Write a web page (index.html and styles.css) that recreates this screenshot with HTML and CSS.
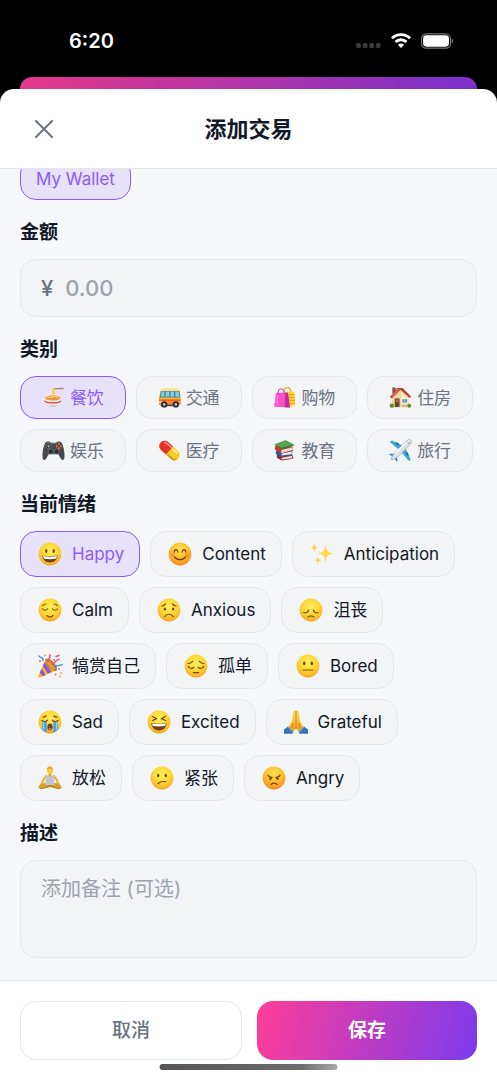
FILE: index.html
```html
<!DOCTYPE html>
<html lang="zh-CN">
<head>
<meta charset="utf-8">
<meta name="viewport" content="width=device-width, initial-scale=1">
<title>添加交易</title>
<link rel="stylesheet" href="styles.css">
</head>
<body>
<svg class="defs" width="0" height="0" aria-hidden="true">
  <defs>
    <radialGradient id="skin" cx="0.5" cy="0.35" r="0.68">
      <stop offset="0" stop-color="#ffee5c"/><stop offset="0.55" stop-color="#ffd633"/><stop offset="0.85" stop-color="#fcb423"/><stop offset="1" stop-color="#f08c12"/>
    </radialGradient>
    <radialGradient id="warm" cx="0.5" cy="0.3" r="0.72">
      <stop offset="0" stop-color="#ffe052"/><stop offset="0.5" stop-color="#ffc02f"/><stop offset="0.85" stop-color="#fa9a1f"/><stop offset="1" stop-color="#ec7711"/>
    </radialGradient>
    <linearGradient id="gold" x1="0" y1="0" x2="0" y2="1">
      <stop offset="0" stop-color="#ffd84a"/><stop offset="1" stop-color="#f0a01c"/>
    </linearGradient>
    <linearGradient id="bus" x1="0" y1="0" x2="0" y2="1">
      <stop offset="0" stop-color="#ffe9a0"/><stop offset="0.5" stop-color="#ffc52d"/><stop offset="1" stop-color="#f47a20"/>
    </linearGradient>
    <linearGradient id="star" x1="0" y1="0" x2="0" y2="1">
      <stop offset="0" stop-color="#ffc05a"/><stop offset="0.5" stop-color="#ffdd43"/><stop offset="1" stop-color="#ffc48a"/>
    </linearGradient>
    <symbol id="face" viewBox="0 0 24 24"><circle cx="12" cy="12" r="11.4" fill="url(#skin)"/></symbol>
    <symbol id="face-warm" viewBox="0 0 24 24"><circle cx="12" cy="12" r="11.4" fill="url(#warm)"/></symbol>
  </defs>
</svg>

<div class="screen">
  <header class="status">
    <time class="clock">6:20</time>
    <div class="signals">
      <svg class="dots" viewBox="0 0 25 5" aria-hidden="true"><g fill="#3c3c3e"><rect x="0" width="5" height="5" rx="2"/><rect x="6.6" width="5" height="5" rx="2"/><rect x="13.2" width="5" height="5" rx="2"/><rect x="19.8" width="5" height="5" rx="2"/></g></svg>
      <svg class="wifi" viewBox="0 0 20 15" aria-label="Wi-Fi"><g fill="none" stroke="#fff" stroke-width="2.8"><path d="M1 5.3a12.8 12.8 0 0 1 18 0"/><path d="M4.5 9a7.8 7.8 0 0 1 11 0"/></g><path d="M10 15 6.9 11.8a4.4 4.4 0 0 1 6.2 0z" fill="#fff"/></svg>
      <svg class="battery" viewBox="0 0 34 16" aria-label="电池"><rect x=".6" y=".6" width="29.8" height="14.8" rx="4.8" fill="none" stroke="#77777a" stroke-width="1.2"/><rect x="2.2" y="2.2" width="26.6" height="11.6" rx="3.4" fill="#fff"/><path d="M31.6 5.4c1.9.6 1.9 4.6 0 5.2z" fill="#77777a"/></svg>
    </div>
  </header>
  <div class="peek"></div>

  <section class="sheet">
    <header class="bar">
      <button class="close" type="button" aria-label="关闭"><svg viewBox="0 0 18 18" aria-hidden="true"><path d="M1 1l16 16M17 1 1 17"/></svg></button>
      <h1 class="title">添加交易</h1>
    </header>

    <form class="form" id="entry">
      <div class="wallets"><button class="chip chip-on" type="button" aria-pressed="true">My Wallet</button></div>

      <div class="group">
        <label class="label" for="amount">金额</label>
        <div class="amount"><span>¥</span><input id="amount" type="text" inputmode="decimal" placeholder="0.00"></div>
      </div>

      <div class="group">
        <h2 class="label">类别</h2>
        <div class="cats">
          <button class="chip cat chip-on" type="button" aria-pressed="true">
            <svg class="emoji" viewBox="0 0 24 24" aria-hidden="true"><path d="M11 2.3 22.5 1.6V3.4L11 3.6z" fill="#a58a6c"/><path d="M10.4 2h2.8v9h-2.8z" fill="#f6c64e"/><path d="M11.3 2v9" stroke="#fff0a0" stroke-width=".7"/><path d="M1.5 12.5c0 5.2 3.6 8.5 9.7 8.5s9.7-3.3 9.7-8.5z" fill="#ece7e2"/><path d="M2.2 15c4.5 2.6 13.5 2.6 18 0l-.6 1.6c-4 2.2-12.6 2.2-16.8 0z" fill="#d5473b"/><ellipse cx="11.2" cy="12.5" rx="9.7" ry="3.7" fill="#f5eee7"/><ellipse cx="11.2" cy="12.4" rx="8.2" ry="2.8" fill="#eb9145"/><path d="M4 12.2c3-2 4 1 7-.9s5 1 7 .6" fill="none" stroke="#ffd275" stroke-width="1.2"/><ellipse cx="11.2" cy="20.8" rx="4" ry=".8" fill="#c9c3be"/></svg>
            <span>餐饮</span></button>
          <button class="chip cat" type="button" aria-pressed="false">
            <svg class="emoji" viewBox="0 0 24 24" aria-hidden="true"><rect x="3" y="18" width="18" height="3" fill="#4a3c38"/><path d="M2.500 4.600C3 2.500 7 1.800 13 1.800s9.300.7 9.800 2.800l.8 8.400v5.500c0 .8-.5 1-1 1H2c-.7 0-1-.4-1-1V12z" fill="url(#bus)"/><path d="M3 5.200h19.500l.7 6.700H1.800z" fill="#437d92"/><path d="M3.700 5.800h3v5.500H2.900zM8 5.800h3.800v5.500H8zM13 5.800h3.700v5.500H13zM18 5.800h3.600l.7 5.500H18z" fill="#82cce0"/><path d="M1 14h22.600v1.700H1z" fill="#f4602f"/><rect x="1" y="16" width="3" height="1.400" fill="#fff2b0"/><g fill="#282b30"><circle cx="6.500" cy="19.200" r="3.300"/><circle cx="18.600" cy="19.200" r="3.300"/></g><g fill="#bfc4c9"><circle cx="6.500" cy="19.200" r="1.400"/><circle cx="18.600" cy="19.200" r="1.400"/></g></svg>
            <span>交通</span></button>
          <button class="chip cat" type="button" aria-pressed="false">
            <svg class="emoji" viewBox="0 0 24 24" aria-hidden="true"><path d="M11 7c1-7 7-7 8 0" fill="none" stroke="#e8ad25" stroke-width="1.3"/><path d="M11 6h11l1.2 14-7 2.2-5-2z" fill="#ffd23b"/><path d="M16 9h6.3M16 12h6.6M16.5 15h6.3M16.5 18h6.5" stroke="#e6a21d" stroke-width="1.2"/><path d="M3.2 7 15.5 7l2.2 15.5-16.5-.9z" fill="#f750ca"/><path d="m12.800 7 2.700 0 2.200 15.500-5.400-.3z" fill="#c32da3"/><path d="m5 9-1 10" stroke="#ff8ee2" stroke-width="1.2"/><path d="M5 10c0-10 6.500-9 7.500 0" fill="none" stroke="#e143ad" stroke-width="1.1"/></svg>
            <span>购物</span></button>
          <button class="chip cat" type="button" aria-pressed="false">
            <svg class="emoji" viewBox="0 0 24 24" aria-hidden="true"><path d="M3.500 1.500h3.300v6H3.500z" fill="#8d5145"/><path d="M2.800 10 11 3l9.800 8v11H2.800z" fill="#f1d5a4"/><path d="m12.500 4 8.300 7v11h-8.300z" fill="#fae5bd"/><path d="M.8 11.700 8.200 2.200h6.200l8.800 9-1.800 1.400-9.500-8.700-8.700 9z" fill="#b64238"/><path d="m2 11 6.700-8.200h3L4 11.500z" fill="#dc695b"/><rect x="6" y="13" width="5" height="9" fill="#75412e"/><rect x="7" y="14" width="3" height="3" fill="#af6d47"/><rect x="13.200" y="13" width="6.500" height="5.200" fill="#fff6e0"/><rect x="14" y="13.800" width="4.900" height="3.600" fill="#4b91c2"/><path d="M16.400 13.800v3.600" stroke="#b5e2ed" stroke-width=".8"/><circle cx="3" cy="20.500" r="2.300" fill="#668d2c"/><circle cx="21" cy="20.600" r="2.200" fill="#668d2c"/><path d="M13 19.500h6.500V22H13z" fill="#d6b482"/></svg>
            <span>住房</span></button>
          <button class="chip cat" type="button" aria-pressed="false">
            <svg class="emoji" viewBox="0 0 24 24" aria-hidden="true"><path d="M3.500 4C5 2.300 8 2.300 9.500 3.800h5C16 2.300 19 2.300 20.500 4c1.500 2.500 3.200 9 3 14.500-.1 4-2.500 4.300-4.100 1.600L17 16H7l-2.400 4.100C3 22.800.6 22.500.5 18.500.3 13 2 6.500 3.500 4z" fill="#44474b"/><path d="M5 4.200c1.200-.7 3-.6 4 .5h6c1-1.100 2.800-1.200 4-.5" fill="none" stroke="#73777b"/><g fill="#24272a" stroke="#777b7e" stroke-width=".8"><circle cx="6.800" cy="7.500" r="2.600"/><circle cx="9" cy="13" r="2.600"/><circle cx="15.300" cy="13" r="2.600"/></g><path d="M5.400 7.500h2.800M6.800 6.100v2.800" stroke="#adb0b2"/><g fill="#f16c3d"><circle cx="17.600" cy="5.600" r="1.100"/><circle cx="19.700" cy="7.700" r="1.100"/><circle cx="15.500" cy="7.700" r="1.100"/><circle cx="17.600" cy="9.800" r="1.100"/></g></svg>
            <span>娱乐</span></button>
          <button class="chip cat" type="button" aria-pressed="false">
            <svg class="emoji" viewBox="0 0 24 24" aria-hidden="true"><g transform="rotate(42 12 12)"><rect x="-.5" y="6.500" width="25" height="11" rx="5.500" fill="#f1cd2d"/><path d="M12 6.500H5a5.500 5.500 0 0 0 0 11h7z" fill="#e63525"/><path d="M13 15.500h6.500a4 4 0 0 0 4-2.500c.8 3-1 4.500-4 4.500H13z" fill="#d19c12"/><path d="M3 9.200c2-1.200 5-1 8-1" stroke="#ff9b83" stroke-width="1.500" stroke-linecap="round" fill="none"/><path d="M13.500 8.600h6" stroke="#fff298" stroke-width="1.700" stroke-linecap="round"/></g></svg>
            <span>医疗</span></button>
          <button class="chip cat" type="button" aria-pressed="false">
            <svg class="emoji" viewBox="0 0 24 24" aria-hidden="true"><path d="m4 17 11-3 6 3.500v3L9 22.500l-5-3z" fill="#902c30"/><path d="m9 19.500 11-2v2.500L9 21.500z" fill="#f2ddd0"/><path d="m3 12.500 11-3 6 3.500v4L9.500 18.500 3 16z" fill="#2858a5"/><path d="m9 15 10.500-2v2.800L9 17.300z" fill="#e6edf4"/><path d="m2 7.500 7-2 12 3v3.800L8.700 15 2 11z" fill="#c33b34"/><path d="m8.700 11.500 12-3v3l-12 3z" fill="#f1dfd3"/><path d="m1.500 6 11.500-4.500 8.500 4.200v1.500l-12 3.500z" fill="#377a38"/><path d="M1.500 5.600 13 1.200l8.500 4.300-12 3.700z" fill="#59a651"/></svg>
            <span>教育</span></button>
          <button class="chip cat" type="button" aria-pressed="false">
            <svg class="emoji" viewBox="0 0 24 24" aria-hidden="true"><path d="M14.500 7 3 1.500.8 3l9.500 8zM17 9.500 22.500 21 21 23.200l-8-9.500z" fill="#3aa5df"/><path d="m5.500 16-4-1-1.300 1.400 5 2.300zM8 18.500l1 4-1.400 1.300-2.300-5z" fill="#278cc8"/><path d="M22.900 1.100c-1.500-1.200-4.300.3-6.500 2.500L7 13c-2 2-4.500 5.500-4.600 8.600 3.100-.1 6.600-2.600 8.600-4.600l9.400-9.400c2.200-2.200 3.700-5 2.500-6.500z" fill="#dbe0e5" stroke="#8c98a3" stroke-width=".6"/><path d="M21.500 1.700c-1.500.4-3 1.500-4.500 3L6.500 15" stroke="#fff" stroke-width="1.500" fill="none"/><path d="m19.200 2.800 2 2" stroke="#53677b" stroke-width="1"/><path d="m7 4 3 2M20 17l-2-3" stroke="#1d6fa5" stroke-width="2"/></svg>
            <span>旅行</span></button>
        </div>
      </div>

      <div class="group">
        <h2 class="label">当前情绪</h2>
        <div class="moods">
          <button class="chip mood chip-on" type="button" aria-pressed="true">
            <svg class="emoji" viewBox="0 0 24 24" aria-hidden="true"><use href="#face"/><g fill="#70430f"><ellipse cx="8.300" cy="9" rx="1.100" ry="1.900"/><ellipse cx="15.700" cy="9" rx="1.100" ry="1.900"/><path d="M4.300 13.600c4 .9 11.400.9 15.400 0-.2 4.200-3.400 7-7.700 7s-7.500-2.800-7.700-7z"/></g><path d="M5 14.100c4 .8 10 .8 14 0-.2 1.500-.7 2.200-1.200 2.600-3.400.6-8.200.6-11.600 0C5.600 16.300 5.200 15.600 5 14.100z" fill="#fff"/></svg>
            <span>Happy</span></button>
          <button class="chip mood" type="button" aria-pressed="false">
            <svg class="emoji" viewBox="0 0 24 24" aria-hidden="true"><use href="#face-warm"/><g fill="none" stroke="#70430f" stroke-width="1.300" stroke-linecap="round"><path d="M6.200 10c.5-3.300 3.100-3.300 3.700 0M14.100 10c.6-3.300 3.200-3.300 3.700 0M6.500 15c2.500 3.400 8.500 3.400 11 0"/></g><g fill="#f4743b" opacity=".45"><circle cx="4.800" cy="13" r="2.300"/><circle cx="19.200" cy="13" r="2.300"/></g></svg>
            <span>Content</span></button>
          <button class="chip mood" type="button" aria-pressed="false">
            <svg class="emoji" viewBox="0 0 24 24" aria-hidden="true"><g fill="url(#star)"><path d="M15.500 1.500c.7 7.500 1.500 9 8 10-6.500 1-7.300 2.500-8 10.500-.7-8-1.500-9.500-8-10.500 6.500-1 7.300-2.500 8-10z"/><path d="M4.300.8c.4 3.700.9 4.400 4 5-3.100.6-3.600 1.300-4 5.200-.4-3.900-.9-4.600-4-5.200 3.100-.6 3.600-1.300 4-5zM8 13.800c.4 3.300.9 4 3.700 4.500-2.800.5-3.300 1.200-3.700 4.700-.4-3.500-.9-4.200-3.700-4.700 2.800-.5 3.300-1.200 3.700-4.500z"/></g></svg>
            <span>Anticipation</span></button>
          <button class="chip mood" type="button" aria-pressed="false">
            <svg class="emoji" viewBox="0 0 24 24" aria-hidden="true"><use href="#face"/><g fill="none" stroke="#76480f" stroke-width="1.100" stroke-linecap="round"><path d="M4.500 10.800c1.200 1.900 4 1.900 5.200 0M14.300 10.800c1.200 1.900 4 1.900 5.200 0M4.600 7.700c.8-1.200 2-1.700 3.400-1.700M19.400 7.700C18.600 6.500 17.400 6 16 6M9 17.500c1.700 1.800 4.300 1.800 6 0"/></g></svg>
            <span>Calm</span></button>
          <button class="chip mood" type="button" aria-pressed="false">
            <svg class="emoji" viewBox="0 0 24 24" aria-hidden="true"><use href="#face"/><g fill="#70430f"><ellipse cx="7.900" cy="11" rx="1.200" ry="1.600"/><ellipse cx="16.100" cy="11" rx="1.200" ry="1.600"/></g><g fill="none" stroke="#76480f" stroke-width="1.200" stroke-linecap="round"><path d="M4.800 8c1.700-.2 2.900-1 3.700-2.200M19.200 8c-1.700-.2-2.900-1-3.700-2.200M7.800 18.700c1.700-3.300 6.700-3.300 8.400 0"/></g></svg>
            <span>Anxious</span></button>
          <button class="chip mood" type="button" aria-pressed="false">
            <svg class="emoji" viewBox="0 0 24 24" aria-hidden="true"><use href="#face"/><g fill="none" stroke="#76480f" stroke-width="1.200" stroke-linecap="round"><path d="M4.700 14.500c2 .9 4.500-.2 5-2.500M19.300 14.500c-2 .9-4.500-.2-5-2.500M9 19.200c1.600-1.800 4.400-1.800 6 0"/></g></svg>
            <span>沮丧</span></button>
          <button class="chip mood" type="button" aria-pressed="false">
            <svg class="emoji" viewBox="0 0 24 24" aria-hidden="true"><path d="M7.500 6 0 22.500c.3 1 1 1.300 2 1L19 16z" fill="#f5b52e"/><path d="m6.600 8-1.800 4 5 7.500 3.800-1.400zM3.700 14.500l-1.800 4 2.700 3.700 3.200-1.300z" fill="#8f56ca"/><ellipse cx="13.200" cy="10.700" rx="3.400" ry="7.800" transform="rotate(-43 13.200 10.700)" fill="#c67621"/><ellipse cx="12.700" cy="11" rx="1.700" ry="6" transform="rotate(-43 12.700 11)" fill="#e8a436"/><g fill="none" stroke-width="1.500" stroke-linecap="round"><path d="M10 8c-1-3 3-3 2-7" stroke="#ed4a6c"/><path d="M14 10c4-1 3-4 7-4.500M18 2.500l3-1" stroke="#ed4a6c"/><path d="M16 13c3-2.500 5.500-.5 8-2.500M5 6.500C6 4 3 4 1 2" stroke="#3f94ea"/></g><g fill="#e95c83"><circle cx="2" cy="7" r="1"/><circle cx="21" cy="15" r="1"/><circle cx="16" cy="6" r="1"/></g><g fill="#f4a442"><circle cx="23" cy="19" r="1"/><circle cx="7" cy="1.500" r="1"/><circle cx="22" cy="22.500" r=".9"/></g><circle cx="17.500" cy="20.500" r="1" fill="#a369d8"/></svg>
            <span>犒赏自己</span></button>
          <button class="chip mood" type="button" aria-pressed="false">
            <svg class="emoji" viewBox="0 0 24 24" aria-hidden="true"><use href="#face"/><g fill="none" stroke="#76480f" stroke-width="1.200" stroke-linecap="round"><path d="M4.200 12.200c.7 2.300 3.800 2.800 5.600 1.300M19.800 12.200c-.7 2.300-3.800 2.800-5.600 1.300M9.300 18.600h5.400M4 9.500c2 0 3.500-.8 4.700-2.200M20 9.500c-2 0-3.500-.8-4.700-2.200"/></g></svg>
            <span>孤单</span></button>
          <button class="chip mood" type="button" aria-pressed="false">
            <svg class="emoji" viewBox="0 0 24 24" aria-hidden="true"><use href="#face"/><g fill="#70430f"><ellipse cx="8.200" cy="9.300" rx="1.200" ry="1.900"/><ellipse cx="15.800" cy="9.300" rx="1.200" ry="1.900"/></g><path d="M7.200 16h9.600" stroke="#76480f" stroke-width="1.200" stroke-linecap="round"/></svg>
            <span>Bored</span></button>
          <button class="chip mood" type="button" aria-pressed="false">
            <svg class="emoji" viewBox="0 0 24 24" aria-hidden="true"><use href="#face"/><path d="M4.500 11h4.300v11.600C7 22 5.300 20.800 4 19.500zM15.200 11h4.300l.5 8.500c-1.300 1.300-3 2.500-4.800 3.100z" fill="#43a4e9"/><path d="M5.500 11.500v8.300M18.500 11.500v8.300" stroke="#90d3fa"/><ellipse cx="12" cy="17" rx="2.600" ry="3.500" fill="#70430f"/><path d="M10.300 18.500c1-1 2.400-1 3.400 0-.2 1-.8 1.700-1.700 1.700s-1.500-.7-1.700-1.700z" fill="#e96356"/><g fill="none" stroke="#76480f" stroke-width="1.300" stroke-linecap="round"><path d="M3.900 10.500c1.400 1.300 4 1.300 5.700-.2M20.100 10.500c-1.400 1.300-4 1.300-5.700-.2M5 7.200c1.300.1 2.400-.4 3-1.200M19 7.200c-1.300.1-2.400-.4-3-1.200"/></g></svg>
            <span>Sad</span></button>
          <button class="chip mood" type="button" aria-pressed="false">
            <svg class="emoji" viewBox="0 0 24 24" aria-hidden="true"><use href="#face"/><g fill="none" stroke="#76480f" stroke-width="1.300" stroke-linecap="round" stroke-linejoin="round"><path d="m5.700 6.500 4 2.200-4.300 1.800M18.300 6.500l-4 2.200 4.300 1.800"/></g><path d="M4.300 13c4 .9 11.400.9 15.400 0-.2 4.500-3.400 7.400-7.700 7.400S4.500 17.500 4.300 13z" fill="#70430f"/><path d="M5 13.500c4 .8 10 .8 14 0-.2 1.500-.7 2.200-1.200 2.600-3.400.6-8.200.6-11.600 0-.6-.4-1-1.100-1.200-2.600z" fill="#fff"/></svg>
            <span>Excited</span></button>
          <button class="chip mood" type="button" aria-pressed="false">
            <svg class="emoji" viewBox="0 0 24 24" aria-hidden="true"><path d="M11.800.8c-1.500-.8-2.400.4-2.600 2L8 11l-3.700 6.300 4.200 5L12 18.500zM12.200.8c1.500-.8 2.400.4 2.600 2L16 11l3.700 6.300-4.200 5L12 18.500z" fill="url(#gold)"/><path d="M12 1v18M9.300 13l-1.500 5M14.700 13l1.500 5" stroke="#c97e13" stroke-width=".9" fill="none"/><path d="m4.200 16.500-4.200 3v4.200h8.300l1.200-1.700zM19.800 16.500l4.200 3v4.200h-8.300L14.500 22z" fill="#3473bb"/><path d="m3.800 16.700 5 5.800M20.200 16.700l-5 5.800" stroke="#74addc" stroke-width="1"/></svg>
            <span>Grateful</span></button>
          <button class="chip mood" type="button" aria-pressed="false">
            <svg class="emoji" viewBox="0 0 24 24" aria-hidden="true"><path d="M8.300 10 5.500 13.500 3 19.500M15.700 10l2.800 3.500L21 19.500" fill="none" stroke="#efb12c" stroke-width="2.200" stroke-linecap="round"/><path d="M7.500 17C4 17 .5 19 .5 21.500c0 1.500 2 1.500 4 1.300l7.500-1.600 7.500 1.600c2 .2 4 .2 4-1.300C23.500 19 20 17 16.500 17z" fill="#d9a22c"/><path d="M2 22.500C6 23 10 19.500 14 19M22 22.500c-4 .5-8-3-12-3.500" fill="none" stroke="#9c7828" stroke-width=".8"/><path d="M8 9.500c2 .5 6 .5 8 0l.5 9.500h-9z" fill="#bfc4cd"/><path d="M10.500 6h3v3.800c-.8 1-2.200 1-3 0z" fill="#e3a126"/><ellipse cx="12" cy="4.600" rx="3" ry="3.500" fill="#fcc936"/><path d="M9 4C9 1.200 10.200.8 10.900.8 11.300-.1 12.700-.1 13.100.8 14 .8 15 1.500 15 4c-1.500-1.800-4.500-1.800-6 0z" fill="#e5aa25"/></svg>
            <span>放松</span></button>
          <button class="chip mood" type="button" aria-pressed="false">
            <svg class="emoji" viewBox="0 0 24 24" aria-hidden="true"><use href="#face"/><g fill="#70430f"><ellipse cx="8.200" cy="9.500" rx="1.200" ry="1.800"/><ellipse cx="15.800" cy="9.500" rx="1.200" ry="1.800"/></g><path d="M8 17.500c2-1.800 4.700-2.300 7.700-1.800" stroke="#76480f" stroke-width="1.200" stroke-linecap="round" fill="none"/></svg>
            <span>紧张</span></button>
          <button class="chip mood" type="button" aria-pressed="false">
            <svg class="emoji" viewBox="0 0 24 24" aria-hidden="true"><use href="#face-warm"/><g fill="#70430f"><ellipse cx="8.500" cy="12.600" rx="1.200" ry="1.600"/><ellipse cx="15.500" cy="12.600" rx="1.200" ry="1.600"/></g><g fill="none" stroke="#76480f" stroke-width="1.300" stroke-linecap="round"><path d="M6 9.300c1 1.600 2.500 2.200 4.200 2.100M18 9.300c-1 1.600-2.500 2.200-4.200 2.100M9 18.500c1.500-1.700 4.500-1.700 6 0"/></g></svg>
            <span>Angry</span></button>
        </div>
      </div>

      <div class="group">
        <label class="label" for="note">描述</label>
        <textarea class="note" id="note" placeholder="添加备注 (可选)"></textarea>
      </div>
    </form>

    <footer class="actions">
      <button class="btn btn-plain" type="button">取消</button>
      <button class="btn btn-save" type="submit" form="entry">保存</button>
      <div class="home"></div>
    </footer>
  </section>
</div>
</body>
</html>
```
FILE: styles.css
```css
* { box-sizing: border-box; }

body {
  margin: 0;
  background: #000;
  color: #111827;
  font-family: Inter, "Noto Sans CJK SC", sans-serif;
}

button, input, textarea { font: inherit; color: inherit; margin: 0; }
button { cursor: pointer; }
.defs { position: absolute; }

.screen {
  display: flex;
  flex-direction: column;
  height: 100vh;
}

.status {
  display: flex;
  flex: none;
  align-items: center;
  justify-content: space-between;
  height: 77px;
  padding: 4px 43px 0 69px;
  color: #fff;
}
.clock { font-size: 20px; font-weight: 600; line-height: 24px; }
.signals { display: flex; align-items: center; gap: 10px; }
.dots { width: 25px; height: 5px; margin-top: 10px; }
.wifi { width: 20px; height: 15px; }
.battery { width: 33px; height: 16px; }

.peek {
  flex: none;
  height: 28px;
  margin: 0 20px -16px;
  border-radius: 12px 12px 0 0;
  background: linear-gradient(100deg, #e53888, #7930cb);
}

.sheet {
  position: relative;
  display: flex;
  flex: 1;
  flex-direction: column;
  min-height: 0;
  overflow: hidden;
  border-radius: 14px 14px 0 0;
  background: #fff;
}

.bar {
  display: grid;
  flex: none;
  grid-template-columns: 48px 1fr 48px;
  align-items: center;
  height: 80px;
  padding: 0 20px;
  border-bottom: 1px solid #e5e7eb;
}
.close {
  display: grid;
  place-items: center;
  height: 48px;
  padding: 0;
  border: 0;
  background: none;
}
.close svg { width: 18px; height: 18px; fill: none; stroke: #6b7280; stroke-width: 2; stroke-linecap: round; }
.title { margin: 0; font-size: 22px; font-weight: 600; line-height: 32px; text-align: center; }

.form {
  display: flex;
  flex: 1;
  flex-direction: column;
  justify-content: flex-end;
  gap: 20px;
  min-height: 0;
  overflow: hidden;
  padding: 0 20px 22px;
  background: #f5f7fb;
}
.wallets, .group { flex: none; }

.label {
  display: block;
  margin: 0 0 13px;
  font-size: 19px;
  font-weight: 600;
  line-height: 26px;
}

.chip {
  display: inline-flex;
  align-items: center;
  justify-content: center;
  height: 43px;
  padding: 0 15px;
  border: 1px solid #e5e7eb;
  border-radius: 16px;
  background: #f3f4f6;
  color: #111827;
  font-size: 17px;
  line-height: 24px;
  white-space: nowrap;
}
.chip.chip-on { border-color: #8b5cf6; background: #e8e1fa; color: #8b5cf6; }
.wallets { display: flex; }

.amount {
  display: flex;
  align-items: center;
  gap: 12px;
  height: 58px;
  padding: 0 20px;
  border: 1px solid #e5e7eb;
  border-radius: 16px;
  background: #f3f4f6;
  color: #6b7280;
  font-size: 22px;
  font-weight: 500;
}
.amount input {
  flex: 1;
  min-width: 0;
  padding: 0;
  border: 0;
  outline: 0;
  background: none;
}
::placeholder { color: #9ca3af; opacity: 1; }

.cats {
  display: grid;
  grid-template-columns: repeat(4, 1fr);
  gap: 10px;
  padding-right: 4px;
}
.chip.cat { gap: 5px; padding: 0; }
.cat:not(.chip-on) { color: #6b7280; }
.emoji { flex: none; width: 24px; height: 24px; overflow: visible; }
.cat .emoji { width: 23px; height: 23px; }

.moods { display: flex; flex-wrap: wrap; gap: 10px; }
.mood { gap: 10px; height: 46px; padding: 0 15px 0 17px; }

.note {
  display: block;
  width: 100%;
  height: 98px;
  padding: 14px 20px;
  border: 1px solid #e5e7eb;
  border-radius: 16px;
  outline: 0;
  background: #f3f4f6;
  font-size: 20px;
  line-height: 28px;
  resize: none;
}

.actions {
  position: relative;
  display: flex;
  flex: none;
  gap: 15px;
  padding: 20px;
  border-top: 1px solid #e5e7eb;
}
.btn {
  flex: 1;
  height: 59px;
  padding: 0;
  border: 0;
  border-radius: 16px;
  font-size: 19px;
  line-height: 28px;
}
.btn-plain { border: 1px solid #e5e7eb; background: #fff; color: #6b7280; font-weight: 500; }
.btn-save { background: linear-gradient(105deg, #ff3d98, #7c3aed); color: #fff; font-weight: 700; }

.home {
  position: absolute;
  bottom: 10px;
  left: 50%;
  width: 36%;
  height: 6px;
  border-radius: 3px;
  background: linear-gradient(90deg, #555755, #6c6c6c 80%, #aaa);
  transform: translateX(-50%);
}
```
